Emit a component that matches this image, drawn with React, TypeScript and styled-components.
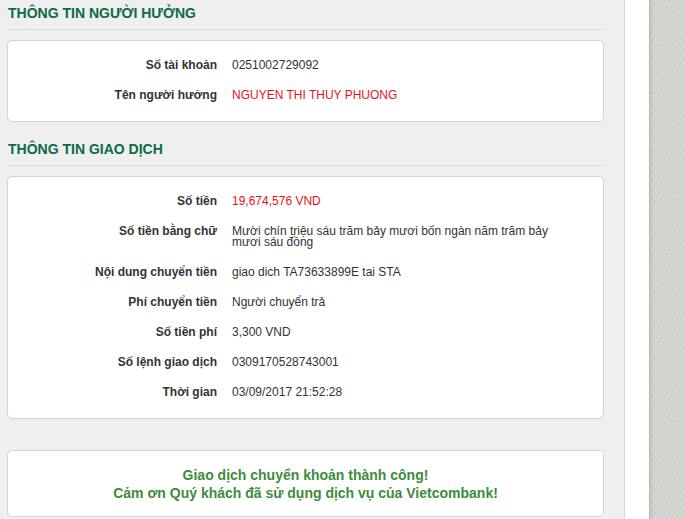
import React from "react";
import styled, { createGlobalStyle } from "styled-components";

const GlobalStyle = createGlobalStyle`
  html, body { margin: 0; padding: 0; background: #ffffff; }
  body { font-family: "Liberation Sans", Arial, sans-serif; font-size: 12px; color: #333; }
`;

const Page = styled.div`
  display: flex;
  min-height: 100vh;
  overflow: hidden;
`;

const Main = styled.main`
  width: 625px;
  flex: none;
  background: #efefef;
  border-right: 1px solid #d6d6d6;
  box-sizing: border-box;
  padding: 0 20px 0 7px;
`;

const Gutter = styled.div`
  width: 24px;
  flex: none;
  background: #ffffff;
`;

const Side = styled.aside`
  flex: 1;
  border-left: 1px solid #b9b9b7;
  background:
    linear-gradient(to right, rgba(0, 0, 0, 0.08) 0, rgba(0, 0, 0, 0) 4px),
    repeating-linear-gradient(37deg, rgba(255, 255, 255, 0.12) 0 1px, rgba(0, 0, 0, 0) 1px 3px),
    repeating-linear-gradient(-61deg, rgba(0, 0, 0, 0.04) 0 1px, rgba(0, 0, 0, 0) 1px 4px),
    #d3d3d0;
`;

const Section = styled.section<{ $gap?: number }>`
  margin-top: ${(p) => p.$gap ?? 0}px;
`;

const Heading = styled.h2`
  margin: 0 0 10px;
  padding: 5px 0 8px 1px;
  border-bottom: 1px dotted #c4c4c4;
  font-family: "Liberation Sans", Arial, sans-serif;
  font-size: 14px;
  line-height: 16px;
  font-weight: bold;
  color: #0b6b45;
  text-transform: uppercase;
`;

const Card = styled.div<{ $pad?: string }>`
  background: #ffffff;
  border: 1px solid #d3d3d3;
  border-radius: 5px;
  padding: ${(p) => p.$pad ?? "9px 0 11px"};
`;

const Row = styled.div`
  display: grid;
  grid-template-columns: 209px 330px;
  column-gap: 15px;
  padding: 10px 0 9px;
  line-height: 11px;
`;

const Label = styled.div`
  text-align: right;
  font-weight: bold;
  color: #333333;
`;

const Value = styled.div<{ $red?: boolean }>`
  color: ${(p) => (p.$red ? "#e8121b" : "#333333")};
`;

const Message = styled.p`
  margin: 0;
  text-align: center;
  font-size: 14px;
  line-height: 18px;
  font-weight: bold;
  color: #3d8b3d;
`;

type Item = { label: string; value: string; red?: boolean };

const beneficiary: Item[] = [
  { label: "Số tài khoản", value: "0251002729092" },
  { label: "Tên người hưởng", value: "NGUYEN THI THUY PHUONG", red: true },
];

const transaction: Item[] = [
  { label: "Số tiền", value: "19,674,576 VND", red: true },
  {
    label: "Số tiền bằng chữ",
    value: "Mười chín triệu sáu trăm bảy mươi bốn ngàn năm trăm bảy mươi sáu đồng",
  },
  { label: "Nội dung chuyển tiền", value: "giao dich TA73633899E tai STA" },
  { label: "Phí chuyển tiền", value: "Người chuyển trả" },
  { label: "Số tiền phí", value: "3,300 VND" },
  { label: "Số lệnh giao dịch", value: "0309170528743001" },
  { label: "Thời gian", value: "03/09/2017 21:52:28" },
];

const Rows = ({ items }: { items: Item[] }) => (
  <Card>
    {items.map((it) => (
      <Row key={it.label}>
        <Label>{it.label}</Label>
        <Value $red={it.red}>{it.value}</Value>
      </Row>
    ))}
  </Card>
);

export default function App() {
  return (
    <>
      <GlobalStyle />
      <Page>
        <Main>
          <Section>
            <Heading>Thông tin người hưởng</Heading>
            <Rows items={beneficiary} />
          </Section>
          <Section $gap={14}>
            <Heading>Thông tin giao dịch</Heading>
            <Rows items={transaction} />
          </Section>
          <Section $gap={31}>
            <Card $pad="15px 0 14px">
              <Message>Giao dịch chuyển khoản thành công!</Message>
              <Message>Cảm ơn Quý khách đã sử dụng dịch vụ của Vietcombank!</Message>
            </Card>
          </Section>
        </Main>
        <Gutter />
        <Side />
      </Page>
    </>
  );
}
